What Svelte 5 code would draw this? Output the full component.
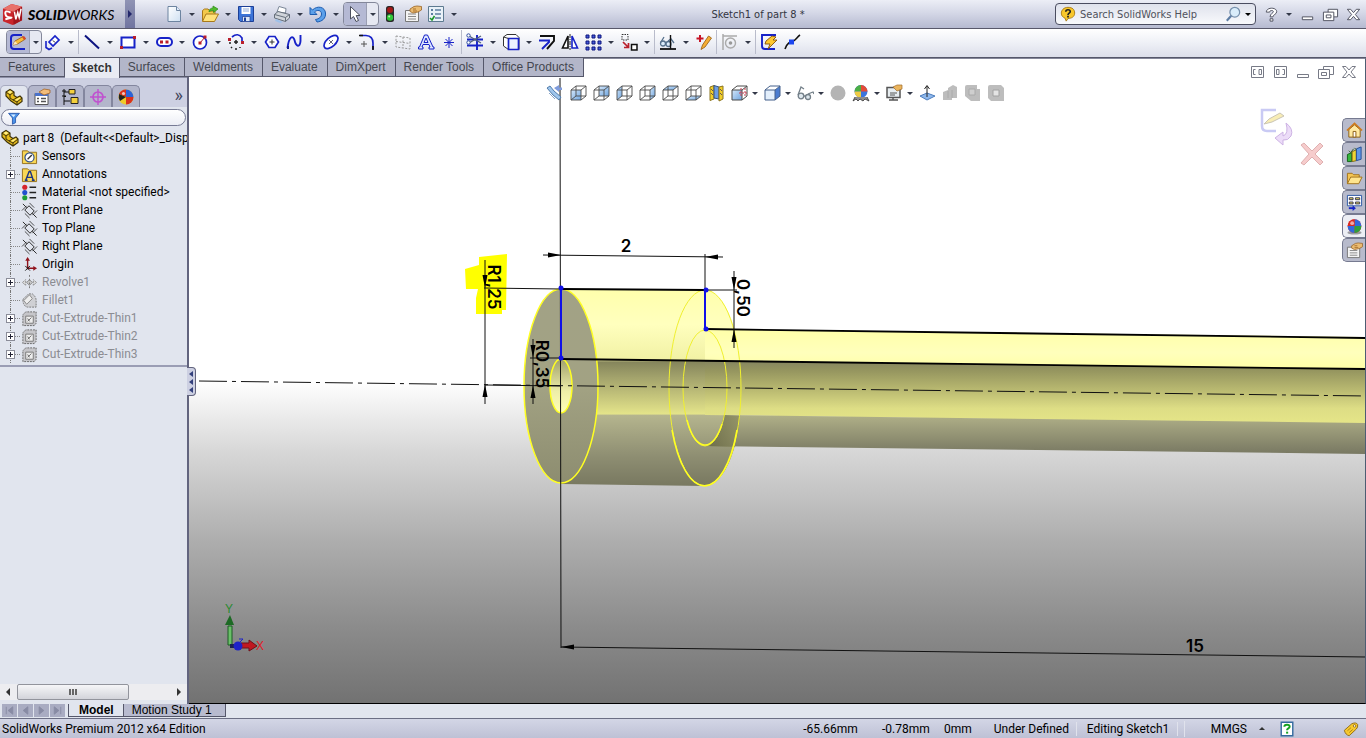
<script>
  // Icon bodies share an 18 x 18 box. Gradients are declared once in the page markup.
  const cubeEdges =
    'M2 6H12V16H2ZM2 6L7 2H17L12 6M17 2V12L12 16M7 2V12L2 16M7 12H17';
  const ghostCube = (face) =>
    `<path d="${face}" fill="url(#blueFace)"/><path d="${cubeEdges}" fill="none" stroke="#4a4a4a" stroke-width=".9"/>`;

  const icons = {
    newDoc: '<path d="M3 1.500H11.500L15.500 5.500V16.500H3Z" fill="url(#paper)" stroke="#6d84a0"/><path d="M11.500 1.500V5.500H15.500" fill="#dfeafa" stroke="#6d84a0"/>',
    open: '<path d="M1.500 16V5.500L3.500 4H7L9 6H14V9" fill="#f3c94a" stroke="#a8791a"/><path d="M1.500 16.500L5 9H17.500L13.500 16.500Z" fill="#ffe27a" stroke="#a8791a"/><path d="M8 7C8 4 10 3 12 3V1L17 4L12.500 7.500V5.500C10 5.500 9 6 8 7Z" fill="#4fbb2c" stroke="#2c8a17" stroke-width=".7"/>',
    save: '<path d="M1.500 1.500H16.500V16.500H3.500L1.500 14.500Z" fill="#3c74d8" stroke="#1c3f96"/><path d="M4.500 2H13.500V9H4.500Z" fill="#fff"/><path d="M6 4H12M6 6H12" stroke="#8fa9d8"/><path d="M5.500 11.500H13V16.500H5.500Z" fill="#dce6f5" stroke="#1c3f96" stroke-width=".7"/><path d="M7 12.500H9V16H7Z" fill="#1c3f96"/>',
    print: '<path d="M4 7L6 1.500L13 3.500L12.500 8Z" fill="#fff" stroke="#7b8797"/><path d="M1.500 9.500L5 6.500L16.500 9.500V13L12.500 16.500L1.500 13Z" fill="#d0d4da" stroke="#666f7b"/><path d="M1.500 9.500L12.500 12.500L16.500 9.500M12.500 12.500V16.500" fill="none" stroke="#666f7b"/><path d="M3 14L10 17L7 18L2 16Z" fill="#9fc1ea"/>',
    undo: '<path d="M1 2.500V9.500H8L5.500 7C8 4.500 12.500 5 12.500 9C12.500 12 10 14 6.500 14.500L8 17C13 16.500 17 13.500 16.500 8C16 2 8.500 0 3.500 5Z" fill="#5ba0ea" stroke="#1c5cb0"/>',
    cursor: '<path d="M4.500 1.500V14L7.500 11.500L10 16.500L12.500 15.500L10.200 10.500H14Z" fill="#fff" stroke="#4b4f5c"/>',
    traffic: '<rect x="5" y="1" width="8" height="16" rx="2.500" fill="#292929"/><circle cx="9" cy="5" r="3" fill="#a41818"/><circle cx="9" cy="12.500" r="3.200" fill="#2fc637"/><circle cx="8.200" cy="11.500" r="1" fill="#baf9ae"/>',
    options: '<path d="M1.500 5.500H14.500V16.500H1.500Z" fill="#f4f4f4" stroke="#777"/><path d="M4 9H12M4 11.500H12M4 14H12" stroke="#888"/><path d="M6 4L10 1.500L13 1L17.500 1.500V5L14 7L9 8L6 6.500Z" fill="#eabb72" stroke="#9a6425" stroke-width=".8"/><path d="M9 4L12 4M9 6H13" stroke="#a8712c"/>',
    checklist: '<path d="M1.500 1.500H16.500V16.500H1.500Z" fill="#e9f1f8" stroke="#5d7a90"/><path d="M8 5H14M8 9H14M8 13H14" stroke="#5d7fa0" stroke-width="1.300"/><path d="M4 4H6V6H4ZM4 8H6V10H4Z" fill="#5d7fa0"/><path d="M3 13L5 15L7.500 11" fill="none" stroke="#1c9728" stroke-width="1.600"/>',
    sketch: '<path d="M13 2H5Q2 2 2 5V13Q2 16 5 16H16" fill="none" stroke="#1722c8" stroke-width="2"/><path d="M4 12L6 8L14 3.500L16.500 6L8.500 11Z" fill="#f8bd38" stroke="#965a14" stroke-width=".8"/><path d="M4 12L6 8L8.500 11Z" fill="#fbe8bf"/><path d="M13 4L15 7L17 5.500L15 3Z" fill="#d44a2a"/>',
    dimension: '<path d="M5 9L11 3L15 7L9 13Z" fill="#fff" stroke="#1722c8" stroke-width="1.700"/><path d="M2 8V14.500L5 16.500L8 15" fill="none" stroke="#1722c8" stroke-width="1.600"/><path d="M9 7.500L11 9.500" stroke="#111"/>',
    line: '<path d="M2 2.500L16 15.500" stroke="#0c1380" stroke-width="2"/>',
    rect: '<path d="M2.500 4.500H15.500V14.500H2.500Z" fill="#fff" stroke="#1722c8" stroke-width="2"/><path d="M1 13H4V16H1ZM14 3H17V6H14Z" fill="#b91e2b"/>',
    slot: '<rect x="2" y="5" width="15" height="8" rx="4" fill="#fff" stroke="#1722c8" stroke-width="2"/><path d="M5 7.500H8V10.500H5ZM10.500 7.500H13.500V10.500H10.500Z" fill="#b91e2b"/>',
    circle: '<circle cx="9" cy="9.500" r="6.500" fill="#fff" stroke="#1722c8" stroke-width="1.700"/><path d="M9 10L14 4" stroke="#b91e2b"/><path d="M7.500 8.500H10.500V11.500H7.500ZM12.500 2.500H15.500V5.500H12.500Z" fill="#b91e2b"/>',
    arc: '<path d="M5 4Q11 -1 15 5V9" fill="none" stroke="#1722c8" stroke-width="1.700"/><path d="M3 9V11M4 14L5 15M9 15V17M13 14V15M9 7V11M7 9H11" stroke="#222" stroke-width="1.500"/><path d="M1 5H4V8H1ZM14 8H17V11H14Z" fill="#b91e2b"/>',
    polygon: '<path d="M6 3.500H12L15.500 9L12 14.500H6L2.500 9Z" fill="#fff" stroke="#1722c8" stroke-width="1.700"/><path d="M9 6.500V11.500M6.500 9H11.500" stroke="#333"/>',
    spline: '<path d="M1.500 15C3 3 7 2 8.500 7C10 14 14 15 14.500 8V2" fill="none" stroke="#1722c8" stroke-width="1.900"/><path d="M1 13H3V16H1Z" fill="#111a90"/>',
    ellipse: '<ellipse cx="9" cy="9" rx="8.500" ry="4.500" transform="rotate(-42 9 9)" fill="#fff" stroke="#1722c8" stroke-width="1.700"/><path d="M7 7L11 11M11 7L7 11" stroke="#667"/>',
    fillet: '<path d="M2 2.500H8Q15 3 15 10V16" fill="none" stroke="#1722c8" stroke-width="1.700"/><path d="M1 2.500H5M15 13V17" stroke="#111" stroke-width="1.700"/><path d="M6 8V14M3 11H9" stroke="#555"/>',
    sketchPlane: '<path d="M2 3L16 5V16L2 14ZM9 4V15M2 8.500L16 10.500" fill="none" stroke="#999" stroke-dasharray="2 1.500"/>',
    textTool: '<path d="M1.500 16H6V14H5L6 11.500H12L13 14H12V16H17V14H16L10.500 2H7.500L2.500 14H1.500ZM7 9.500L9 5L11 9.500Z" fill="#dce5ff" fill-rule="evenodd" stroke="#1722c8"/>',
    point: '<path d="M9 4V15M4 9.500H14M5.500 6L12.500 13M12.500 6L5.500 13" stroke="#1722c8"/>',
    trim: '<path d="M1 6.500H17M1 12.500H17M11 2V17" stroke="#1722c8" stroke-width="1.900"/><path d="M3 3L15 10M3 10L15 3" stroke="#53627d" stroke-width="1.400"/><circle cx="2.500" cy="2.500" r="1.700" fill="#fff" stroke="#3451a0"/><circle cx="2.500" cy="9.500" r="1.700" fill="#fff" stroke="#3451a0"/>',
    convert: '<path d="M1.500 4L5 1.500H14L17 4.500V16.500H6.500L1.500 13Z" fill="#fff" stroke="#333"/><path d="M6.500 5.500H16.500V16.500H6.500Z" fill="#eaf1ff" stroke="#1722c8" stroke-width="1.700"/><path d="M1.500 4L6.500 5.500" stroke="#333"/>',
    offset: '<path d="M2 3H16V8L9 16" fill="none" stroke="#111" stroke-width="1.900"/><path d="M1 7.500H11V9L4 16" fill="none" stroke="#1722c8" stroke-width="1.900"/>',
    mirror: '<path d="M7 3V15H1.500Z" fill="#fff" stroke="#111" stroke-width="1.600"/><path d="M11 3V15H16.500Z" fill="#fff" stroke="#1722c8" stroke-width="1.600"/><path d="M9 1V17" stroke="#222" stroke-dasharray="4 1 1 1"/>',
    pattern: '<path d="M2 2H5V5H2ZM8 2H11V5H8ZM14 2H17V5H14ZM2 8H5V11H2ZM8 8H11V11H8ZM14 8H17V11H14ZM2 14H5V17H2ZM8 14H11V17H8ZM14 14H17V17H14Z" fill="#4159d8" stroke="#0f177f"/>',
    move: '<path d="M2 1.500H8V7H2Z" fill="none" stroke="#333" stroke-dasharray="1.500 1"/><path d="M11.500 11.500H17V17H11.500Z" fill="#fff" stroke="#111" stroke-width="1.500"/><path d="M3 9L8 14M8.500 10V14.500H4" stroke="#b91e2b" stroke-width="1.700" fill="none"/>',
    relations: '<path d="M1 16H17" stroke="#111" stroke-width="1.800"/><circle cx="4" cy="10.500" r="2.500" fill="#dcebfa" stroke="#56718c" stroke-width="1.300"/><circle cx="9.500" cy="11" r="2.500" fill="#dcebfa" stroke="#56718c" stroke-width="1.300"/><path d="M2 9L5 4M9 8L12 6L15 10" fill="none" stroke="#56718c" stroke-width="1.300"/><path d="M11.500 2V16" stroke="#111" stroke-width="1.400"/>',
    repair: '<path d="M5 2V9M1.500 5.500H8.500" stroke="#c71526" stroke-width="2"/><path d="M6 16.500L7.500 12L13.500 3L16.500 5L10 14Z" fill="#f6ae35" stroke="#9d661b" stroke-width=".9"/>',
    snaps: '<path d="M2 1V17M2 3H16" stroke="#aaa" stroke-width="1.500"/><circle cx="9.500" cy="10" r="5" fill="none" stroke="#aaa" stroke-width="1.400"/><circle cx="9.500" cy="10" r="1.800" fill="#999"/>',
    rapid: '<path d="M16 2H2V13Q2 16 5 16H15" fill="none" stroke="#1722c8" stroke-width="1.900"/><path d="M6 8L12 3L16 4L13 7H17L8 16L10 11H5Z" fill="#ffc82c" stroke="#81500e" stroke-width=".9"/>',
    instant: '<path d="M2 16C4 10 7 9 10 8S14 4 17 2" fill="none" stroke="#111" stroke-width="1.600"/><path d="M6 6.500H11V11.500H6Z" fill="#1c46f0"/>',
    zoomFit: '<path d="M1 4L4 2L8 7L15 13L13 16L7 11Z" fill="#9fc6ed" stroke="#527caa"/><path d="M8 4L13 1V3.500H16V6H13V8Z" fill="#7f9bdc"/><path d="M3 9L9 15" stroke="#88a4c8"/>',
    front: ghostCube('M2 6H12V16H2Z'),
    back: ghostCube('M7 2H17V12H7Z'),
    left: ghostCube('M2 6L7 2V12L2 16Z'),
    right: ghostCube('M12 6L17 2V12L12 16Z'),
    top: ghostCube('M2 6L7 2H17L12 6Z'),
    bottom: ghostCube('M2 16L7 12H17L12 16Z'),
    section: '<path d="M3 3L7 1.500V15L3 16.500Z" fill="#f2cf28" stroke="#8b7420"/><path d="M7 1.500L12 3V15L7 14Z" fill="#6c9de2" stroke="#38537c"/><path d="M12 3L16 2V15L12 17Z" fill="#f2cf28" stroke="#8b7420"/><path d="M4 5L6 7M4 9L6 11M13 5L15 7M13 9L15 11" stroke="#655"/>',
    orient: '<path d="M2 6H12V16H2Z" fill="url(#blueFace)"/><path d="M2 6H12V16H2ZM2 6L7 2H17L12 6M17 2V12L12 16" fill="none" stroke="#4a4a4a"/><path d="M11 4V12M15 4V12M9 9H17" stroke="#c23a4d" stroke-dasharray="2 1"/>',
    shaded: '<path d="M2 6H12V16H2Z" fill="#e3effc"/><path d="M12 6L17 2V12L12 16Z" fill="#4a7cd0"/><path d="M2 6L7 2H17L12 6Z" fill="#fff"/><path d="M2 6H12V16H2ZM2 6L7 2H17L12 6M17 2V12L12 16" fill="none" stroke="#44608c"/>',
    glasses: '<circle cx="5" cy="12" r="2.800" fill="#dfe8ee" stroke="#737f88" stroke-width="1.300"/><circle cx="12" cy="13" r="2.500" fill="#dfe8ee" stroke="#737f88" stroke-width="1.300"/><path d="M2 11L5 3L8 5M12 10L17 8L18 10M8 12H10" fill="none" stroke="#737f88" stroke-width="1.300"/>',
    ball: '<circle cx="9" cy="9" r="7.500" fill="#b4b4b4"/>',
    appearance: '<circle cx="9" cy="7.500" r="6.500" fill="#3b74dc"/><path d="M9 7.500V1A6.500 6.500 0 0 1 15.500 7.500Z" fill="#e34b38"/><path d="M9 7.500V1A6.500 6.500 0 0 0 2.500 7.500Z" fill="#4caf45"/><path d="M9 7.500V14A6.500 6.500 0 0 1 2.500 7.500Z" fill="#efcb42"/><path d="M3 13L1 17L4 15L6 17L8 15L11 17L13 15L17 17L15 13" fill="#8d8d8d" stroke="#333" stroke-width=".8"/>',
    viewSettings: '<path d="M2 3.500H15V13.500H2Z" fill="#e7edf0" stroke="#555" stroke-width="1.500"/><path d="M4 16H13M8 14V16" stroke="#555" stroke-width="1.400"/><path d="M8 3L12 1H17V5L12 7Z" fill="#ebb55d" stroke="#9d6a2b" stroke-width=".7"/><path d="M5 9H12M5 11H10" stroke="#555"/>',
    normalTo: '<path d="M2 12L9 9L17 12L9 16Z" fill="#8fb8ec" stroke="#4d7dbd"/><path d="M9 13V2M6.500 5L9 1.500L11.500 5" fill="none" stroke="#222"/>',
    combineA: '<path d="M2 8L7 6V4L12 1L16 3V14H11V16H2Z" fill="#bdbdbd"/><path d="M7 7V14M11 6V14" stroke="#aaa"/>',
    combineB: '<path d="M1 3Q1 1 3 1H13V5H16V17H7L1 12Z" fill="#bdbdbd"/><path d="M5 5H11V11H5Z" fill="#cfcfcf" stroke="#aaa"/>',
    combineC: '<path d="M1 3Q1 1 3 1H14L17 4V17H4L1 14Z" fill="#bdbdbd"/><path d="M6 6H12V12H6Z" fill="#e4e4e4" stroke="#a2a2a2"/>',
    part: '<path d="M1 4L5 1.500L9 4V7.500L12 9.500L15 8L17 10V13.500L12 17L6 13L1 8Z" fill="#e8bd1c" stroke="#40340a" stroke-width="1.200"/><path d="M1 4L5 7V10L8 12L12 14V17M5 7L9 4M8 12L12 9.500M12 14L17 10" fill="none" stroke="#40340a"/><path d="M2.500 4L5 2.500L7.500 4L5 5.500ZM10 12L12 10.700L15 9.300L15.500 10L12 12.700Z" fill="#fff08a"/>',
    property: '<path d="M2 5.500H15V16.500H2Z" fill="#fff" stroke="#555"/><path d="M2 5H15V8H2Z" fill="#4b72c9"/><path d="M4 10.500H6M8 10.500H13M4 13.500H6M8 13.500H13" stroke="#555" stroke-width="1.400"/><path d="M6 4L11 1L17 2V5L11 7Z" fill="#f2bd7a" stroke="#a5662a" stroke-width=".8"/>',
    config: '<path d="M3 1V17M3 4H9M3 13H9M3 8.500H5" stroke="#111"/><path d="M8 1.500H14V6H8ZM10 9.500H17V15.500H10Z" fill="#f3d03c" stroke="#222"/><path d="M1 3H5M1 8H5" stroke="#111"/>',
    dimx: '<circle cx="9" cy="9" r="5" fill="none" stroke="#c052cf" stroke-width="1.700"/><path d="M9 1V17M1 9H17" stroke="#c052cf" stroke-width="1.400"/>',
    appearBall: '<circle cx="9" cy="9" r="7.500" fill="#efca29"/><path d="M9 9V1.500A7.500 7.500 0 0 1 16.500 9Z" fill="#2d62d8"/><path d="M9 9V1.500A7.500 7.500 0 0 0 2 6Z" fill="#d9321e"/><path d="M9 9H16.500A7.500 7.500 0 0 1 9 16.500Z" fill="#d9321e"/><path d="M9 9L2 6Q1 10 3 13Z" fill="#222"/><circle cx="6.500" cy="5.500" r="1.600" fill="#fff" opacity=".7"/>',
    sphere: '<ellipse cx="9" cy="15.500" rx="7.500" ry="2" fill="#9a9aa0"/><circle cx="9" cy="8.500" r="7.300" fill="#e5382a"/><path d="M9 8.500V1.200A7.300 7.300 0 0 1 16.300 8.500Z" fill="#3268dc"/><path d="M9 8.500V1.200A7.300 7.300 0 0 0 1.700 8.500Z" fill="#d92a22"/><path d="M9 8.500V15.800A7.300 7.300 0 0 1 1.700 8.500Z" fill="#3268dc"/><path d="M9 8.500V15.800A7.300 7.300 0 0 0 16.300 8.500Z" fill="#2e9e3e"/><circle cx="6.500" cy="5.500" r="2" fill="#fff" opacity=".6"/>',
    sensors: '<path d="M1.500 3H7L8.500 4.500H16.500V16.500H1.500Z" fill="#f8d755" stroke="#94701c"/><circle cx="9" cy="10" r="4.800" fill="#fff" stroke="#35558c" stroke-width="1.300"/><path d="M7 12L11.500 7.500" stroke="#333" stroke-width="1.400"/>',
    annotations: '<path d="M1.500 3H7L8.500 4.500H16.500V16.500H1.500Z" fill="#f8d755" stroke="#94701c"/><path d="M5 15L8.500 6H10L13 15M6 12H12M4 15H7M11.500 15H14.500" fill="none" stroke="#1d3583" stroke-width="1.500"/>',
    material: '<circle cx="4" cy="3.500" r="2.700" fill="#d6252c"/><circle cx="4" cy="9" r="2.700" fill="#2250cf"/><circle cx="4" cy="14.500" r="2.700" fill="#1f9c37"/><path d="M9 3.500H16M9 9H16M9 14.500H16" stroke="#222" stroke-width="1.700"/>',
    plane: '<path d="M1 9L9 1L17 9L9 17Z" fill="none" stroke="#333" stroke-width=".9" stroke-dasharray="7 4.300"/><path d="M4 8.500L8.500 4L14 9.500L9.500 14ZM2 2L6 6M12 12L16.500 16.500" fill="none" stroke="#222"/>',
    origin: '<path d="M7 14V3M7 13H15" stroke="#91131c" stroke-width="1.500"/><path d="M4.500 5L7 1L9.500 5ZM13 10.500L17 13L13 15.500Z" fill="#91131c"/><path d="M4.500 10.500L9.500 15.500M9.500 10.500L4.500 15.500" stroke="#111"/>',
    revolve: '<path d="M1.500 9L5 6V12ZM16.500 9L13 6V12Z" fill="#ddd" stroke="#888" stroke-dasharray="2 1"/><path d="M6 9L9 6L12 9L9 12Z" fill="#c9c9c9" stroke="#888"/><path d="M9 1V17" stroke="#777" stroke-dasharray="2 2"/>',
    filletF: '<path d="M2 8L8 2H12Q16 5 16 9V16H7Q2 15 2 8Z" fill="#cfd0d4" stroke="#777" stroke-dasharray="2 1"/><path d="M3 9L9 3L12 7L6 13Z" fill="#eee" stroke="#888"/>',
    cut: '<path d="M2 5L5 2H16V14L14 16.500H2Z" fill="#c6c6ca" stroke="#666" stroke-dasharray="2 1"/><path d="M5 6.500H13V14H5Z" fill="#eee" stroke="#777"/><path d="M7 12L11 8M7 9L9 12" stroke="#666"/>',
    home: '<path d="M3 8V16H15V8L9 3Z" fill="#ffe9a0" stroke="#8a5c13"/><path d="M1 9L9 1.500L17 9" fill="none" stroke="#cf7b1c" stroke-width="1.800"/><path d="M7.500 10H10.500V16H7.500Z" fill="#fff" stroke="#8a5c13"/>',
    library: '<path d="M1.500 9L6 7V16.500H1.500Z" fill="#36b83d" stroke="#126019"/><path d="M6.500 6L11 4V15.500L6.500 16.500Z" fill="#f0d534" stroke="#7d6a14"/><path d="M11 3L16 1V14L11 15.500Z" fill="#5f97e8" stroke="#254d93"/><path d="M3 5L5 7L8 3M9 2L11 4" stroke="#335a24" fill="none"/>',
    folder: '<path d="M1.500 14.500V3.500H6.500L8 5H14V8" fill="#f4c553" stroke="#a0711b"/><path d="M1.500 14.500L5 7.500H17L13.500 14.500Z" fill="#ffe58e" stroke="#a0711b"/>',
    palette: '<path d="M1.500 1.500H16.500V12.500H1.500Z" fill="#fff" stroke="#2a57a6"/><path d="M3.500 4H7.500V6H3.500ZM10 4H14.500V6H10ZM3.500 8.500H7.500V10.500H3.500ZM10 8.500H14.500V10.500H10Z" fill="#e9dc5b" stroke="#335"/><path d="M3 15H8" stroke="#1424c8" stroke-width="2"/><path d="M7 12L10.500 15L7 18Z" fill="#1424c8"/>',
    helpBubble: '<path d="M9 1.500C14 1.500 16.500 4 16.500 8S13 14 9 14L7 17L5.500 13.500C3 12.500 1.500 11 1.500 8S4 1.500 9 1.500Z" fill="#f8c72c" stroke="#a5760f"/><path d="M6.500 6.500C6.500 3.500 11.500 3.500 11.500 6.200C11.500 8 9 8 9 10" fill="none" stroke="#222" stroke-width="1.900"/><path d="M8 11H10V13H8Z" fill="#222"/>',
    search: '<circle cx="11" cy="7" r="5.500" fill="#d9ecfa" stroke="#7790ac" stroke-width="1.400"/><path d="M7 11L2 16.500" stroke="#5f7ea5" stroke-width="2.400"/>',
    help: '<path d="M3.500 6.500C3.500 1 14.500 1 14.500 6C14.500 9 10.500 9 10.500 11.500H7.500C7.500 8 11 7.500 11 6C11 4.300 7 4.300 7 6.500ZM7.500 13.500H10.500V16H7.500Z" fill="#fff" stroke="#4c4f5c"/>',
    minimize: '<path d="M3.500 11.500H14.500V14.500H3.500Z" fill="#fff" stroke="currentColor"/>',
    restore: '<path d="M6.500 3.500H16.500V11.500H6.500Z" fill="#fff" stroke="currentColor"/><path d="M1.500 6.500H12.500V15.500H1.500ZM4.500 9.500H9.500V12.500H4.500Z" fill="#fff" stroke="currentColor"/>',
    close: '<path d="M2.500 3.500H6L9 7L12 3.500H15.500L11 9L15.500 14.500H12L9 11L6 14.500H2.500L7 9Z" fill="#fff" stroke="currentColor"/>',
    paneLeft: '<path d="M3.500 3.500H15.500V14.500H3.500Z" fill="#fff" stroke="currentColor"/><path d="M7.500 6.500H5.500V11.500H7.500M11 6.500H13.500V11.500H11Z" fill="none" stroke="currentColor"/>',
    paneRight: '<path d="M3.500 3.500H15.500V14.500H3.500Z" fill="#fff" stroke="currentColor"/><path d="M5.500 6.500H8V11.500H5.500ZM11.500 6.500H13.500V11.500H11.500" fill="none" stroke="currentColor"/>',
    filter: '<path d="M2 3H16L11 9V15L7 17V9Z" fill="#4a92e8" stroke="#1f4da2"/><path d="M5 4.500H11L8.500 8Z" fill="#d8ecff"/>',
    question: '<path d="M2.500 1.500H15.500V16.500H2.500Z" fill="#fff" stroke="#356b9f" stroke-width="1.600"/><path d="M6 6.500C6 3.500 12 3.500 12 6.200C12 8.500 9 8 9 10.500" fill="none" stroke="#16a21f" stroke-width="2.200"/><path d="M8 12H10.300V14.200H8Z" fill="#16a21f"/>',
    tag: '<path d="M1.500 10.500L10 3Q15 1 16.500 4Q17 7 15 9L7 16.500Q3 16 1.500 10.500Z" fill="#f7c92e" stroke="#8c6510"/><circle cx="13" cy="5.500" r="1.400" fill="#fff" stroke="#8c6510"/><path d="M5 11L9 7.500M7 13L11 9.500" stroke="#a67b14"/>'
  };

  const fileTools = [
    { icon: 'newDoc', label: 'New', menu: true },
    { icon: 'open', label: 'Open', menu: true },
    { icon: 'save', label: 'Save', menu: true },
    { icon: 'print', label: 'Print', menu: true },
    { icon: 'undo', label: 'Undo', menu: true },
    { icon: 'cursor', label: 'Select', menu: true, active: true },
    { icon: 'traffic', label: 'Rebuild' },
    { icon: 'options', label: 'File Properties' },
    { icon: 'checklist', label: 'Options', menu: true }
  ];

  const sketchTools = [
    { icon: 'sketch', label: 'Exit Sketch', menu: true, active: true },
    { icon: 'dimension', label: 'Smart Dimension', menu: true, gap: true },
    { icon: 'line', label: 'Line', menu: true },
    { icon: 'rect', label: 'Rectangle', menu: true },
    { icon: 'slot', label: 'Slot', menu: true },
    { icon: 'circle', label: 'Circle', menu: true },
    { icon: 'arc', label: 'Arc', menu: true },
    { icon: 'polygon', label: 'Polygon' },
    { icon: 'spline', label: 'Spline', menu: true },
    { icon: 'ellipse', label: 'Ellipse', menu: true },
    { icon: 'fillet', label: 'Sketch Fillet', menu: true },
    { icon: 'sketchPlane', label: 'Plane' },
    { icon: 'textTool', label: 'Text' },
    { icon: 'point', label: 'Point', gap: true },
    { icon: 'trim', label: 'Trim Entities', menu: true },
    { icon: 'convert', label: 'Convert Entities', menu: true },
    { icon: 'offset', label: 'Offset Entities' },
    { icon: 'mirror', label: 'Mirror Entities' },
    { icon: 'pattern', label: 'Linear Sketch Pattern', menu: true },
    { icon: 'move', label: 'Move Entities', menu: true, gap: true },
    { icon: 'relations', label: 'Display Relations', menu: true },
    { icon: 'repair', label: 'Repair Sketch', gap: true },
    { icon: 'snaps', label: 'Quick Snaps', menu: true, gap: true },
    { icon: 'rapid', label: 'Rapid Sketch' },
    { icon: 'instant', label: 'Instant2D' }
  ];

  const viewTools = [
    { icon: 'zoomFit', label: 'Zoom to Fit' },
    { icon: 'front', label: 'Front' },
    { icon: 'back', label: 'Back' },
    { icon: 'left', label: 'Left' },
    { icon: 'right', label: 'Right' },
    { icon: 'top', label: 'Top' },
    { icon: 'bottom', label: 'Bottom' },
    { icon: 'section', label: 'Section View' },
    { icon: 'orient', label: 'View Orientation', menu: true },
    { icon: 'shaded', label: 'Display Style', menu: true },
    { icon: 'glasses', label: 'Hide/Show Items', menu: true },
    { icon: 'ball', label: 'Edit Appearance' },
    { icon: 'appearance', label: 'Apply Scene', menu: true },
    { icon: 'viewSettings', label: 'View Settings', menu: true },
    { icon: 'normalTo', label: 'Normal To' },
    { icon: 'combineA', label: 'Add' },
    { icon: 'combineB', label: 'Subtract' },
    { icon: 'combineC', label: 'Common' }
  ];

  const commandTabs = [
    'Features',
    'Sketch',
    'Surfaces',
    'Weldments',
    'Evaluate',
    'DimXpert',
    'Render Tools',
    'Office Products'
  ];

  const managerTabs = [
    { icon: 'part', label: 'FeatureManager' },
    { icon: 'property', label: 'PropertyManager' },
    { icon: 'config', label: 'ConfigurationManager' },
    { icon: 'dimx', label: 'DimXpertManager' },
    { icon: 'appearBall', label: 'DisplayManager' }
  ];

  const tree = [
    { icon: 'sensors', name: 'Sensors' },
    { icon: 'annotations', name: 'Annotations', expand: true },
    { icon: 'material', name: 'Material <not specified>' },
    { icon: 'plane', name: 'Front Plane' },
    { icon: 'plane', name: 'Top Plane' },
    { icon: 'plane', name: 'Right Plane' },
    { icon: 'origin', name: 'Origin' },
    { icon: 'revolve', name: 'Revolve1', expand: true, rolled: true },
    { icon: 'filletF', name: 'Fillet1', rolled: true },
    { icon: 'cut', name: 'Cut-Extrude-Thin1', expand: true, rolled: true },
    { icon: 'cut', name: 'Cut-Extrude-Thin2', expand: true, rolled: true },
    { icon: 'cut', name: 'Cut-Extrude-Thin3', expand: true, rolled: true }
  ];

  const taskTabs = [
    { icon: 'home', label: 'Resources' },
    { icon: 'library', label: 'Design Library' },
    { icon: 'folder', label: 'File Explorer' },
    { icon: 'palette', label: 'View Palette' },
    { icon: 'sphere', label: 'Appearances' },
    { icon: 'options', label: 'Custom Properties' }
  ];

  const windowButtons = ['minimize', 'restore', 'close'];
  const viewportButtons = ['paneLeft', 'paneRight', 'minimize', 'restore', 'close'];

  let activeTab = $state('Sketch');
  let activeManager = $state('part');
  let activeTask = $state('sphere');
  let activeStudy = $state('Model');
  let help = $state('');
  let filter = $state('');
</script>

{#snippet icon(name)}
  <svg class="icon" viewBox="0 0 18 18" aria-hidden="true">{@html icons[name]}</svg>
{/snippet}

{#snippet toolGroup(tool)}
  <span class="tool" class:active={tool.active} class:gap={tool.gap}>
    <button class="tool-main" aria-label={tool.label}>{@render icon(tool.icon)}</button>
    {#if tool.menu}
      <button class="tool-menu" aria-label="{tool.label} menu"><i class="caret"></i></button>
    {/if}
  </span>
{/snippet}

<svg class="defs" aria-hidden="true">
  <defs>
    <linearGradient id="paper" x1="0" y1="0" x2="1" y2="1">
      <stop offset="0" stop-color="#fff" />
      <stop offset="1" stop-color="#cfe0f2" />
    </linearGradient>
    <linearGradient id="blueFace" x1="0" y1="0" x2="1" y2="1">
      <stop offset="0" stop-color="#d4e7fa" />
      <stop offset="1" stop-color="#6fa5df" />
    </linearGradient>
  </defs>
</svg>

<div class="app">
  <header class="title-bar">
    <div class="brand">
      <svg class="brand-logo" viewBox="0 0 22 24" aria-hidden="true">
        <path d="M1 6L10 1L21 4V18L11 23L1 19Z" fill="#c9252b" />
        <path d="M1 6L10 1L21 4L12 9Z" fill="#e8716b" />
        <path d="M12 9L21 4V18L12 23Z" fill="#a3151c" />
        <path d="M9 10Q3 7 3.500 11T8.500 15T3.500 17" fill="none" stroke="#fff" stroke-width="2" />
        <path d="M13 9L14.500 17L16.500 10L18 15L20 6" fill="none" stroke="#fff" stroke-width="1.600" />
      </svg>
      <span class="brand-name"><b>SOLID</b>WORKS</span>
    </div>
    <button class="brand-arrow" aria-label="Show menus"><i></i></button>
    <div class="file-tools">
      {#each fileTools as tool}{@render toolGroup(tool)}{/each}
    </div>
    <h1>Sketch1 of part 8 *</h1>
    <label class="help-search">
      {@render icon('helpBubble')}
      <input type="text" placeholder="Search SolidWorks Help" aria-label="Search help" bind:value={help} />
      {@render icon('search')}
      <i class="caret dark"></i>
    </label>
    <div class="window-tools">
      {@render toolGroup({ icon: 'help', label: 'Help', menu: true })}
      {#each windowButtons as name}
        <button class="win" aria-label={name}>{@render icon(name)}</button>
      {/each}
    </div>
  </header>

  <div class="sketch-bar">
    {#each sketchTools as tool}{@render toolGroup(tool)}{/each}
  </div>

  <main class="workspace">
    <nav class="command-tabs">
      {#each commandTabs as tab}
        <button class:selected={tab === activeTab} onclick={() => (activeTab = tab)}>{tab}</button>
      {/each}
    </nav>

    <aside class="manager">
      <div class="manager-tabs">
        {#each managerTabs as tab}
          <button
            class:selected={tab.icon === activeManager}
            aria-label={tab.label}
            onclick={() => (activeManager = tab.icon)}>{@render icon(tab.icon)}</button
          >
        {/each}
        <span class="more">»</span>
      </div>
      <label class="filter">
        {@render icon('filter')}
        <input type="text" aria-label="Filter tree" bind:value={filter} />
      </label>
      <div class="tree">
        <div class="root">{@render icon('part')}<span>part 8&nbsp; (Default&lt;&lt;Default&gt;_Disp</span></div>
        <ul>
          {#each tree as node}
            <li class:rolled={node.rolled}>
              <span class="branch">
                {#if node.expand}<button class="plus" aria-label="Expand {node.name}"></button>{/if}
              </span>
              {@render icon(node.icon)}
              <span>{node.name}</span>
            </li>
          {/each}
        </ul>
      </div>
      <div class="lower-pane"></div>
      <div class="scroll">
        <button class="to-left" aria-label="Scroll left"></button>
        <div class="track"><div class="thumb"><i></i></div></div>
        <button class="to-right" aria-label="Scroll right"></button>
      </div>
      <button class="splitter" aria-label="Collapse panel"><i></i><i></i><i></i></button>
    </aside>

    <section class="viewport">
      <svg class="model" role="img" aria-label="Revolve preview with sketch dimensions">
        <defs>
          <linearGradient id="hub" gradientUnits="userSpaceOnUse" x1="0" y1="289" x2="0" y2="486">
            <stop offset="0" stop-color="#ffffac" />
            <stop offset=".18" stop-color="#ffffbe" />
            <stop offset=".36" stop-color="#f1f1a4" />
            <stop offset=".37" stop-color="#85855c" />
            <stop offset=".45" stop-color="#a3a36c" />
            <stop offset=".635" stop-color="#e4e48a" />
            <stop offset=".64" stop-color="#b5b58e" />
            <stop offset=".85" stop-color="#8e8e72" />
            <stop offset="1" stop-color="#787860" />
          </linearGradient>
          <linearGradient id="rodLight" x1="0" y1="0" x2="0" y2="1">
            <stop offset="0" stop-color="#ffffa8" />
            <stop offset=".6" stop-color="#ffffbc" />
            <stop offset="1" stop-color="#ffffa6" />
          </linearGradient>
          <linearGradient id="rodBore" x1="0" y1="0" x2="0" y2="1">
            <stop offset="0" stop-color="#858560" />
            <stop offset=".15" stop-color="#95955f" />
            <stop offset=".45" stop-color="#b8b870" />
            <stop offset=".75" stop-color="#dddd85" />
            <stop offset="1" stop-color="#e6e688" />
          </linearGradient>
          <linearGradient id="rodDark" x1="0" y1="0" x2="0" y2="1">
            <stop offset="0" stop-color="#b0b088" />
            <stop offset="1" stop-color="#787862" />
          </linearGradient>
          <linearGradient id="ring" x1="0" y1="0" x2="1" y2="0">
            <stop offset="0" stop-color="#62623c" />
            <stop offset="1" stop-color="#8a8a5c" />
          </linearGradient>
          <linearGradient id="face" x1="0" y1="0" x2="0" y2="1">
            <stop offset="0" stop-color="#a2a286" />
            <stop offset=".5" stop-color="#a2a283" />
            <stop offset="1" stop-color="#8d8d70" />
          </linearGradient>
          <linearGradient id="bore" x1="0" y1="0" x2="0" y2="1">
            <stop offset="0" stop-color="#a0a06c" />
            <stop offset=".6" stop-color="#eeeea8" />
            <stop offset="1" stop-color="#ffffb6" />
          </linearGradient>
          <g id="tip"><path d="M0 0L-13 -2.500V2.500Z" /></g>
        </defs>
        <g transform="translate(-189 -59)">
          <path d="M479 257L507 254L506 310H502V314H476V298L478 289H466L465 269L479 265Z" fill="#ff0" />

          <path d="M561 289L705 290A37 98 0 0 1 705 486L561 484Z" fill="url(#hub)" />
          <path d="M705 329L1366 337V369L705 361Z" fill="url(#rodLight)" />
          <path d="M705 361L1366 369V424L705 415Z" fill="url(#rodBore)" />
          <path d="M724 415L1366 423V454L705 446A22 58 0 0 0 724 415Z" fill="url(#rodDark)" />
          <path d="M724 415L740 416Q739 432 735 447L705 446A22 58 0 0 0 724 415Z" fill="url(#ring)" opacity=".7" />
          <ellipse cx="561" cy="386" rx="37" ry="97" fill="url(#face)" stroke="#ff2" stroke-width="1.500" />
          <ellipse cx="561" cy="386" rx="11" ry="27" fill="url(#bore)" stroke="#ff2" stroke-width="1.500" />
          <g fill="none" stroke="#f0f030">
            <ellipse cx="705" cy="388" rx="36" ry="98" />
            <ellipse cx="705" cy="388" rx="22" ry="58" />
            <path d="M672 430A36 98 0 0 0 737 430M687 420A22 58 0 0 0 722 424" stroke="#ff2" stroke-width="1.500" />
          </g>

          <g stroke="#000" stroke-width="1.800">
            <path d="M561 289L705 290M561 359L1366 369M705 329L1366 338" />
          </g>
          <g stroke="#111" fill="none">
            <path d="M560 78L561 648" />
            <path d="M199 381L1366 396" stroke-dasharray="28 5 4 5" />
            <path d="M485 385L561 386" />
            <path d="M543 255L723 257M705 254V290" />
            <path d="M485 260V404M484 288L561 289" />
            <path d="M533 339V404M530 358H561" />
            <path d="M734 271V348M705 290H737" />
            <path d="M561 647L1366 657" />
          </g>
          <g fill="#000">
            <use href="#tip" transform="translate(561 255)" />
            <use href="#tip" transform="translate(705 257) rotate(180)" />
            <use href="#tip" transform="translate(485 288) rotate(90)" />
            <use href="#tip" transform="translate(485 384) rotate(-90)" />
            <use href="#tip" transform="translate(533 358) rotate(90)" />
            <use href="#tip" transform="translate(533 385) rotate(-90)" />
            <use href="#tip" transform="translate(734 290) rotate(90)" />
            <use href="#tip" transform="translate(734 329) rotate(-90)" />
            <use href="#tip" transform="translate(561 647) rotate(180)" />
          </g>
          <path d="M561 288V358M705 290V329" stroke="#1010e8" stroke-width="2" />
          <g fill="#1010e8">
            <circle cx="561" cy="288" r="2.500" />
            <circle cx="561" cy="358" r="2.500" />
            <circle cx="706" cy="290" r="2.500" />
            <circle cx="706" cy="329" r="2.500" />
          </g>
          <g class="dims">
            <text x="626" y="252">2</text>
            <text x="1195" y="652">15</text>
            <text transform="translate(488 287) rotate(90)">R1,25</text>
            <text transform="translate(536 364) rotate(90)">R0,35</text>
            <text transform="translate(737 298) rotate(90)">0,50</text>
          </g>

          <g class="triad">
            <path d="M228 645V626H232V645Z" fill="#6abf68" stroke="#1b5c22" />
            <path d="M225 625L230 615L234 625Z" fill="#1d6a24" />
            <path d="M230 644H238V648H230Z" fill="#1b2350" />
            <path d="M241 643H249V640L257 646L249 651V648H241Z" fill="#c01820" stroke="#701018" />
            <circle cx="238" cy="646" r="4.500" fill="#1d22c8" />
            <path d="M239 639H243L240 642" fill="none" stroke="#1d22c8" />
            <text x="229" y="613" fill="#2b8a30">Y</text>
            <text x="260" y="650" fill="#e02028">X</text>
          </g>
        </g>
      </svg>

      <div class="view-tools">
        {#each viewTools as tool}{@render toolGroup(tool)}{/each}
      </div>
      <div class="viewport-buttons">
        {#each viewportButtons as name}
          <button class="win" aria-label={name}>{@render icon(name)}</button>
        {/each}
      </div>
      <div class="confirm">
        <button aria-label="Exit sketch">
          <svg width="34" height="40" viewBox="0 0 34 40" aria-hidden="true">
            <path d="M16 2H2V18Q2 23 7 23H16" fill="none" stroke="#c9caf4" stroke-width="2.500" />
            <path d="M4 16L9 11L20 5L24 8L12 14Z" fill="#f8edb5" stroke="#c9c4b5" />
            <path d="M26 15Q34 21 31 28Q28 33 23 32V37L15 30L23 24V28Q29 26 26 15Z" fill="#ecdcf8" stroke="#cdb3e4" />
          </svg>
        </button>
        <button aria-label="Cancel sketch">
          <svg width="24" height="24" viewBox="0 0 24 24" aria-hidden="true">
            <path d="M1 3L4 1L12 9L20 1L23 4L15 12L23 20L20 23L12 15L4 23L1 21L9 12Z" fill="#f6cccc" stroke="#dfb0b0" />
          </svg>
        </button>
      </div>
      <div class="task-tabs">
        {#each taskTabs as tab}
          <button
            class:selected={tab.icon === activeTask}
            aria-label={tab.label}
            onclick={() => (activeTask = tab.icon)}>{@render icon(tab.icon)}</button
          >
        {/each}
      </div>
    </section>
  </main>

  <nav class="study-tabs">
    <div class="steps">
      <button aria-label="First tab"><svg viewBox="0 0 15 14"><path d="M4 3V11M11 3L6 7L11 11Z" /></svg></button>
      <button aria-label="Previous tab"><svg viewBox="0 0 15 14"><path d="M10 3L5 7L10 11Z" /></svg></button>
      <button aria-label="Next tab"><svg viewBox="0 0 15 14"><path d="M5 3L10 7L5 11Z" /></svg></button>
      <button aria-label="Last tab"><svg viewBox="0 0 15 14"><path d="M11 3V11M4 3L9 7L4 11Z" /></svg></button>
    </div>
    {#each ['Model', 'Motion Study 1'] as study}
      <button class="study" class:selected={study === activeStudy} onclick={() => (activeStudy = study)}>{study}</button>
    {/each}
  </nav>

  <footer class="status">
    <span class="product">SolidWorks Premium 2012 x64 Edition</span>
    <span class="coord">-65.66mm</span>
    <span class="coord">-0.78mm</span>
    <span class="coord short">0mm</span>
    <span class="state">Under Defined</span>
    <span class="state">Editing Sketch1</span>
    <span class="slot"></span>
    <button class="units">MMGS <i></i></button>
    <button class="status-icon" aria-label="Quick tips">{@render icon('question')}</button>
    <button class="status-icon tag" aria-label="Tags">{@render icon('tag')}</button>
  </footer>
</div>

<style>
  :global(body) {
    background: #e1e5ee;
  }

  .defs {
    position: absolute;
    width: 0;
    height: 0;
  }

  .app {
    display: flex;
    flex-direction: column;
    height: 100vh;
    overflow: hidden;
    font: 12px Roboto, 'Noto Sans', sans-serif;
    color: #000;
  }

  button {
    display: flex;
    align-items: center;
    justify-content: center;
    margin: 0;
    padding: 0;
    border: 0;
    background: none;
    color: inherit;
    font: inherit;
  }

  input {
    flex: 1;
    min-width: 0;
    padding: 0;
    border: 0;
    outline: 0;
    background: none;
    font: inherit;
  }

  .icon {
    display: block;
    flex: none;
    width: 18px;
    height: 18px;
  }

  .caret {
    border: 3px solid transparent;
    border-top-color: #333848;
    border-bottom: 0;
  }

  .caret.dark {
    border-top-color: #000;
  }

  .tool {
    display: flex;
    align-items: center;
    height: 24px;
    flex: none;
    box-sizing: border-box;
  }

  .tool-main {
    width: 22px;
    height: 22px;
  }

  .tool-menu {
    width: 14px;
    height: 22px;
  }

  .tool:not(:has(.tool-menu)) {
    padding-right: 1px;
  }

  .tool.active {
    border: 1px solid #83879a;
    border-radius: 4px;
    background: #e6e8f2;
  }

  .tool.active .tool-main {
    background: #b5b9d4;
    border-radius: 3px 0 0 3px;
  }

  .tool.active .tool-menu {
    width: 12px;
    border-left: 1px solid #9a9eb2;
  }

  /* title bar */
  .title-bar {
    display: flex;
    align-items: center;
    height: 28px;
    flex: none;
    background: linear-gradient(#eceef6, #d5d8e7 45%, #b6bad0);
    border-bottom: 1px solid #58586a;
  }

  .brand {
    display: flex;
    align-items: center;
    gap: 5px;
    align-self: stretch;
    width: 123px;
    padding-left: 2px;
    background: linear-gradient(#d9dbe6, #a9adc4);
    font: italic 14px Lato, sans-serif;
  }

  .brand b {
    font-weight: 900;
  }

  .brand-logo {
    width: 21px;
    height: 23px;
  }

  .brand-arrow {
    align-self: stretch;
    width: 10px;
    margin-right: 28px;
    background: linear-gradient(#9094b4, #7074a0);
  }

  .brand-arrow i {
    border: 4px solid transparent;
    border-left-color: #23276a;
    border-right: 0;
  }

  .file-tools {
    display: flex;
  }

  h1 {
    flex: 1;
    margin: 0;
    font: 11px 'DejaVu Sans Condensed', 'DejaVu Sans', sans-serif;
    text-align: center;
    color: #33353f;
  }

  .help-search {
    display: flex;
    align-items: center;
    gap: 4px;
    width: 201px;
    height: 22px;
    box-sizing: border-box;
    padding: 0 4px;
    border: 1px solid #4a4d60;
    border-radius: 4px;
    background: linear-gradient(#dfe2ec, #f8f9fc);
    font: 11px 'DejaVu Sans Condensed', 'DejaVu Sans', sans-serif;
  }

  .help-search .icon {
    width: 16px;
    height: 16px;
  }

  .help-search input::placeholder {
    color: #50525c;
    opacity: 1;
  }

  .window-tools {
    display: flex;
    align-items: center;
    padding: 0 1px 0 4px;
    color: #4c4f5c;
  }

  .window-tools .icon {
    width: 17px;
    height: 17px;
  }

  .win {
    width: 23px;
    height: 22px;
  }

  /* sketch command bar */
  .sketch-bar {
    display: flex;
    align-items: center;
    height: 29px;
    flex: none;
    box-sizing: border-box;
    padding: 0 0 2px 6px;
    background: linear-gradient(#fff, #eef0f6 50%, #dcdeea);
    border-bottom: 1px solid #55576a;
  }

  .sketch-bar .tool.gap {
    border-right: 1px solid #b9bccb;
    margin-right: 2px;
  }

  .workspace {
    display: grid;
    grid-template: 19px 1fr / 189px 1fr;
    flex: 1;
    min-height: 0;
  }

  .command-tabs {
    grid-area: 1 / 1 / 2 / 3;
    z-index: 1;
    display: flex;
    justify-self: start;
    border-bottom: 1px solid #55576a;
    font: 12px 'Liberation Sans', sans-serif;
  }

  .command-tabs button {
    padding: 0 9px 0 8px;
    border-right: 1px solid #55576a;
    background: #b3b6c9;
    color: #44464f;
    white-space: nowrap;
  }

  .command-tabs .selected {
    padding: 0 7px;
    margin-bottom: -2px;
    background: #e9ebf3;
    font-weight: bold;
    color: #333;
  }

  /* feature manager */
  .manager {
    grid-area: 2 / 1;
    position: relative;
    display: flex;
    flex-direction: column;
    min-width: 0;
    background: #e1e5ee;
    border-right: 2px solid #62647e;
  }

  .manager-tabs {
    display: flex;
    align-items: flex-end;
    height: 30px;
    background: #cdd0e2;
    border-top: 1px solid #8d90a6;
    box-sizing: border-box;
  }

  .manager-tabs button {
    width: 28px;
    height: 22px;
    box-sizing: border-box;
    border: 1px solid #83869e;
    border-bottom: 0;
    border-radius: 5px 5px 0 0;
    background: #b3b6cb;
  }

  .manager-tabs .selected {
    background: #e1e5ee;
    border-color: #a8abc0;
  }

  .more {
    margin: 0 4px 2px auto;
    font-size: 18px;
    line-height: 20px;
    color: #44465c;
  }

  .filter {
    display: flex;
    align-items: center;
    height: 17px;
    box-sizing: border-box;
    margin: 2px 1px 3px;
    padding: 0 5px;
    border: 1px solid #777b94;
    border-radius: 9px;
    background: linear-gradient(#fff, #eceef5);
  }

  .filter .icon {
    width: 14px;
    height: 14px;
  }

  .tree {
    overflow: hidden;
    padding-bottom: 2px;
    border-bottom: 2px solid #9a9db4;
    white-space: nowrap;
  }

  .root,
  li {
    display: flex;
    align-items: center;
    height: 18px;
  }

  .root {
    gap: 4px;
    padding-left: 1px;
  }

  ul {
    margin: 0;
    padding: 0;
    list-style: none;
  }

  li .icon {
    width: 17px;
    height: 17px;
    margin-right: 4px;
  }

  .rolled {
    color: #8b8c92;
  }

  .branch {
    display: flex;
    align-items: center;
    width: 10px;
    height: 18px;
    margin-left: 10px;
    border-left: 1px dotted #777;
    background: linear-gradient(90deg, #888 50%, transparent 50%) 0 9px / 2px 1px repeat-x;
  }

  .plus {
    width: 9px;
    height: 9px;
    margin-left: -5px;
    box-sizing: border-box;
    border: 1px solid #8a8c98;
    background:
      linear-gradient(#223, #223) center / 5px 1px no-repeat,
      linear-gradient(#223, #223) center / 1px 5px no-repeat,
      #fff;
  }

  .lower-pane {
    flex: 1;
  }

  .scroll {
    display: flex;
    height: 16px;
    margin-bottom: 4px;
    background: #ededf0;
  }

  .scroll button {
    width: 16px;
  }

  .to-left::before,
  .to-right::before {
    content: '';
    border: 4px solid transparent;
    border-left: 0;
    border-right-color: #333;
  }

  .to-right::before {
    transform: scaleX(-1);
  }

  .track {
    flex: 1;
  }

  .thumb {
    display: flex;
    align-items: center;
    justify-content: center;
    width: 71%;
    height: 14px;
    margin-left: 1px;
    border: 1px solid #92949c;
    border-radius: 2px;
    background: linear-gradient(#f6f6f8, #d3d4da);
  }

  .thumb i {
    width: 8px;
    height: 6px;
    background: repeating-linear-gradient(90deg, #666 0 2px, transparent 2px 3px);
  }

  .splitter {
    position: absolute;
    z-index: 2;
    top: 290px;
    right: -9px;
    width: 9px;
    height: 29px;
    flex-direction: column;
    gap: 2px;
    border: 1px solid #62647e;
    border-left: 0;
    border-radius: 0 4px 4px 0;
    background: #cdd0e2;
    box-sizing: border-box;
  }

  .splitter i {
    border: 3px solid transparent;
    border-left: 0;
    border-right: 4px solid #33407c;
  }

  /* graphics area */
  .viewport {
    grid-area: 1 / 2 / 3 / 3;
    position: relative;
    min-width: 0;
    overflow: hidden;
    background: linear-gradient(#fff 50%, #d7d7d7 61%, #adadad 75%, #8c8c8c 88%, #727272);
    border-top: 1px solid #85879a;
    border-right: 1px solid #4d5d72;
    border-bottom: 1px solid #000;
    box-sizing: border-box;
  }

  .model {
    display: block;
    width: 100%;
    height: 100%;
  }

  .dims {
    font: 600 17px Inter, sans-serif;
    text-anchor: middle;
  }

  .triad text {
    font: 12px 'Liberation Sans', sans-serif;
    text-anchor: middle;
  }

  .view-tools {
    position: absolute;
    top: 22px;
    left: 0;
    right: 4px;
    display: flex;
    justify-content: center;
  }

  .view-tools .tool:not(:has(.tool-menu)) {
    padding-right: 0;
  }

  .view-tools .tool-main {
    width: 23px;
  }

  .view-tools .tool-menu {
    width: 10px;
  }

  .viewport-buttons {
    position: absolute;
    top: 2px;
    right: 5px;
    display: flex;
    color: #777a86;
  }

  .confirm {
    position: absolute;
    top: 49px;
    right: 41px;
    display: flex;
    align-items: flex-end;
    gap: 6px;
  }

  .confirm button:last-child {
    margin-bottom: -18px;
  }

  .task-tabs {
    position: absolute;
    top: 59px;
    right: 0;
  }

  .task-tabs button {
    width: 23px;
    height: 24px;
    box-sizing: border-box;
    border: 1px solid #767a90;
    border-right: 0;
    border-radius: 5px 0 0 5px;
    background: #b8bbcc;
  }

  .task-tabs .selected {
    background: #eceef4;
  }

  .task-tabs .icon {
    width: 17px;
    height: 17px;
  }

  /* model and motion tabs */
  .study-tabs {
    display: flex;
    height: 14px;
    flex: none;
    padding-left: 2px;
    background: #e1e5ee;
    border-bottom: 1px solid #6b6e84;
    font: 12px 'Liberation Sans', sans-serif;
  }

  .steps {
    display: flex;
    gap: 1px;
    width: 66px;
  }

  .steps button {
    width: 15px;
    height: 13px;
    background: #a9acc2;
  }

  .steps svg {
    width: 15px;
    height: 13px;
    fill: #888ba4;
    stroke: #888ba4;
  }

  .study {
    height: 13px;
    padding: 0 13px 0 8px;
    border: 1px solid #55576a;
    border-top: 0;
    border-left: 0;
    background: #b8bbcf;
  }

  .study.selected {
    padding: 0 9px 0 10px;
    border-left: 1px solid #55576a;
    background: #e1e5ee;
    font-weight: bold;
  }

  /* status bar */
  .status {
    display: flex;
    align-items: center;
    height: 19px;
    flex: none;
    padding: 0 7px 0 2px;
    background: linear-gradient(#d3d6e6, #bec1d5);
    white-space: nowrap;
  }

  .product {
    flex: 1;
  }

  .coord {
    width: 72px;
    text-align: right;
  }

  .coord.short {
    width: 42px;
  }

  .state {
    width: 76px;
    padding-left: 22px;
    border-right: 1px solid #e0e2ec;
    padding-right: 6px;
  }

  .state + .state {
    width: 84px;
    padding-left: 10px;
  }

  .slot {
    width: 6px;
    height: 16px;
    border-right: 1px solid #e0e2ec;
  }

  .units {
    gap: 12px;
    margin-left: 26px;
  }

  .units i {
    border: 3px solid transparent;
    border-top: 0;
    border-bottom-color: #333;
  }

  .status-icon {
    margin-left: 14px;
  }

  .status-icon.tag {
    margin-left: 48px;
  }

  .status-icon .icon {
    width: 16px;
    height: 16px;
  }
</style>
